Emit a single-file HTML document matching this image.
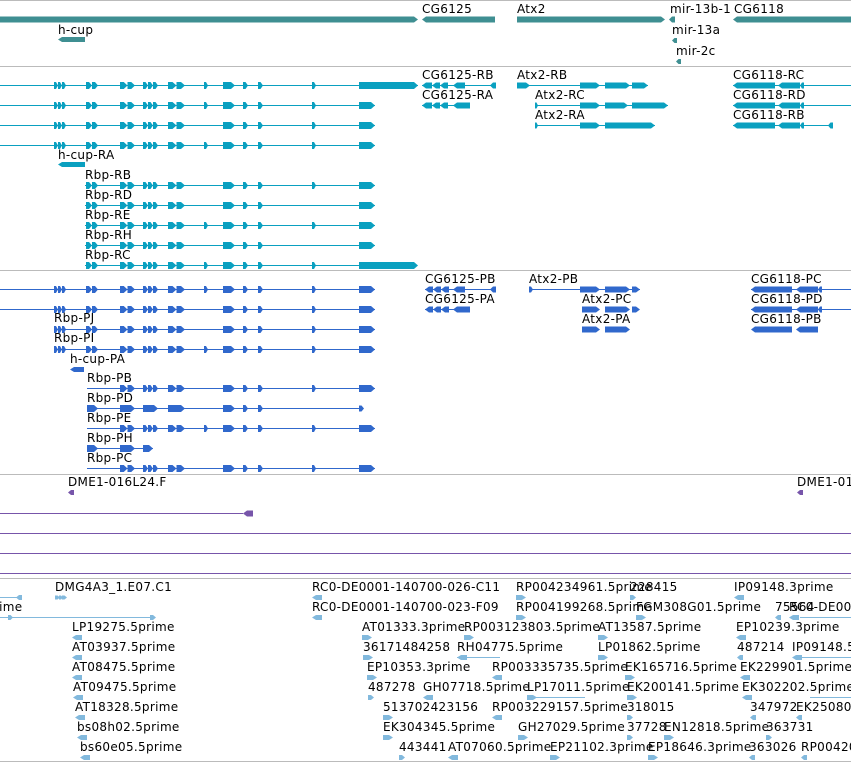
<!DOCTYPE html>
<html><head><meta charset="utf-8">
<style>
html,body{margin:0;padding:0;background:#fff;}
svg{display:block;}
text{font-family:"DejaVu Sans","Liberation Sans",sans-serif;font-size:12px;fill:#000;letter-spacing:0.3px;}
</style></head>
<body>
<svg id="s" width="851" height="762" xmlns="http://www.w3.org/2000/svg">
<g fill="#bbb" shape-rendering="crispEdges">
<rect x="0" y="0" width="851" height="1"/>
<rect x="0" y="66" width="851" height="1"/>
<rect x="0" y="270" width="851" height="1"/>
<rect x="0" y="474" width="851" height="1"/>
<rect x="0" y="578" width="851" height="1"/>
<rect x="0" y="761" width="851" height="1"/>
</g>
</svg>
<script>
var s=document.getElementById('s');var NS='http://www.w3.org/2000/svg';
function el(n,a,t){var e=document.createElementNS(NS,n);for(var k in a)e.setAttribute(k,a[k]);if(t)e.textContent=t;s.appendChild(e);return e;}
function T(x,y,str){el('text',{x:x,y:y},str);}
function L(x1,x2,y,c){el('rect',{x:x1,y:y,width:x2-x1,height:1,fill:c,'shape-rendering':'crispEdges'});}
function B(x1,x2,y,h,c,d){y=y+0.5;var hh=h/2,p=Math.min(4,(x2-x1)/2);var pts;
 if(d=='r')pts=[[x1,y-hh],[x2-p,y-hh],[x2,y],[x2-p,y+hh],[x1,y+hh]];
 else if(d=='l')pts=[[x1+p,y-hh],[x2,y-hh],[x2,y+hh],[x1+p,y+hh],[x1,y]];
 else pts=[[x1,y-hh],[x2,y-hh],[x2,y+hh],[x1,y+hh]];
 el('polygon',{points:pts.map(function(q){return q.join(',')}).join(' '),fill:c});}
var G='#3f8f92';
B(0,418,19,6,G,'r');B(422,495,19,6,G,'l');B(517,665,19,6,G,'r');B(669,675,19,6,G,'l');B(733,851,19,6,G,'l');
T(422,13,'CG6125');T(517,13,'Atx2');T(670,13,'mir-13b-1');T(734,13,'CG6118');
T(58,34,'h-cup');B(58,85,39,5,G,'l');
T(672,34,'mir-13a');B(672,677,40,5,G,'l');T(676,55,'mir-2c');B(676,681,61,5,G,'l');
var ex=[[54,66],[86,98],[120,135],[143,158],[168,185],[204,208],[223,235],[243,248],[258,263],[312,316],[359,375]];
function rbp(y,c,start,end,longEnd,skip){
 L(start,end,y,c);
 ex.forEach(function(e,i){if(e[0]<start)return;if(skip&&skip.indexOf(i)>=0)return;if(e[0]>=end)return;
  var x2=e[1];if(i==10&&longEnd)x2=longEnd;
  if(e[1]-e[0]>10&&i!=5){var n=(i==0||i==3)?3:(i==1||i==2||i==4?2:1);var w=(x2-e[0])/n;if(i==10)n=1,w=x2-e[0];for(var k=0;k<n;k++)B(e[0]+k*w,e[0]+(k+1)*w,y,7,c,'r');}
  else B(e[0],e[1],y,7,c,'r');});
}
var C='#0aa0c0';
rbp(85,C,0,418,418);rbp(105,C,0,375);rbp(125,C,0,375,null,[5]);rbp(145,C,0,375);
T(58,159,'h-cup-RA');B(58,85,164,5,C,'l');
var rl=['Rbp-RB','Rbp-RD','Rbp-RE','Rbp-RH','Rbp-RC'];
rl.forEach(function(n,i){var y=185+20*i;T(85,y-6,n);rbp(y,C,85,375,i==4?418:null,(i==1||i==3)?[5,9]:(i==0?[5]:null));});
T(422,79,'CG6125-RB');L(422,495,85,C);B(422,432,85,6,C,'l');B(432,440,85,6,C,'l');B(440,448,85,6,C,'l');B(453,465,85,6,C,'l');B(490,496,85,6,C,'l');
T(422,99,'CG6125-RA');L(422,470,105,C);B(422,432,105,6,C,'l');B(432,440,105,6,C,'l');B(440,448,105,6,C,'l');B(453,470,105,6,C,'l');
T(517,79,'Atx2-RB');L(517,648,85,C);B(517,530,85,6,C,'r');B(580,600,85,6,C,'r');B(605,630,85,6,C,'r');B(632,648,85,6,C,'r');
T(535,99,'Atx2-RC');L(535,668,105,C);B(535,538,105,6,C,'r');B(580,600,105,6,C,'r');B(605,628,105,6,C,'r');B(632,668,105,6,C,'r');
T(535,119,'Atx2-RA');L(535,655,125,C);B(535,538,125,6,C,'r');B(580,600,125,6,C,'r');B(605,655,125,6,C,'r');
T(733,79,'CG6118-RC');L(733,851,85,C);B(733,775,85,6,C,'l');B(778,800,85,6,C,'l');B(800,804,85,6,C,'l');
T(733,99,'CG6118-RD');L(733,851,105,C);B(733,775,105,6,C,'l');B(778,800,105,6,C,'l');B(800,804,105,6,C,'l');
T(733,119,'CG6118-RB');L(733,833,125,C);B(733,775,125,6,C,'l');B(778,800,125,6,C,'l');B(800,804,125,6,C,'l');B(828,833,125,6,C,'l');
var P='#3068cc';
rbp(289,P,0,375);rbp(309,P,0,375,null,[5]);
T(54,322,'Rbp-PJ');rbp(329,P,54,375,null,[5]);
T(54,342,'Rbp-PI');rbp(349,P,54,375);
T(70,363,'h-cup-PA');B(70,84,369,5,P,'l');
T(87,382,'Rbp-PB');rbp(388,P,87,375,null,[5]);
T(87,402,'Rbp-PD');L(87,363,408,P);ex.slice(2,9).forEach(function(e,i){if(i!=3)B(e[0],e[1],408,7,P,'r');});B(87,98,408,7,P,'r');B(359,364,408,6,P,'r');
T(87,422,'Rbp-PE');rbp(428,P,87,375);
T(87,442,'Rbp-PH');L(87,153,448,P);B(87,98,448,7,P,'r');B(120,135,448,7,P,'r');B(143,153,448,7,P,'r');
T(87,462,'Rbp-PC');rbp(468,P,87,375,null,[5]);
T(425,283,'CG6125-PB');L(425,495,289,P);B(425,433,289,6,P,'l');B(433,441,289,6,P,'l');B(441,449,289,6,P,'l');B(453,465,289,6,P,'l');B(490,496,289,6,P,'l');
T(425,303,'CG6125-PA');L(425,470,309,P);B(425,433,309,6,P,'l');B(433,441,309,6,P,'l');B(441,449,309,6,P,'l');B(453,470,309,6,P,'l');
T(529,283,'Atx2-PB');L(529,640,289,P);B(529,533,289,6,P,'r');B(580,600,289,6,P,'r');B(605,630,289,6,P,'r');B(632,640,289,6,P,'r');
T(582,303,'Atx2-PC');B(582,600,309,6,P,'r');B(605,630,309,6,P,'r');B(632,640,309,6,P,'r');
T(582,323,'Atx2-PA');B(582,600,329,6,P,'r');B(605,630,329,6,P,'r');
T(751,283,'CG6118-PC');L(751,851,289,P);B(751,792,289,6,P,'l');B(796,818,289,6,P,'l');B(818,822,289,6,P,'l');
T(751,303,'CG6118-PD');L(751,851,309,P);B(751,792,309,6,P,'l');B(796,818,309,6,P,'l');B(818,822,309,6,P,'l');
T(751,323,'CG6118-PB');B(751,792,329,6,P,'l');B(796,818,329,6,P,'l');
var V='#7755aa';
T(68,486,'DME1-016L24.F');B(68,74,492,5,V,'l');T(797,486,'DME1-01');B(797,803,492,5,V,'l');
L(0,243,513,V);B(243,253,513,6,V,'l');L(0,851,533,V);L(0,851,553,V);L(0,851,573,V);
var E='#82b9dd';
L(0,20,597,E);B(16,22,597,5,E,'l');T(55,591,'DMG4A3_1.E07.C1');B(55,60,597,4,E,'r');B(59,63,597,4,E,'r');B(62,67,597,4,E,'r');
T(-22,611,'5prime');L(0,155,617,E);B(8,13,617,5,E,'r');B(150,156,617,5,E,'r');
var rows=[
[[312,'RC0-DE0001-140700-026-C11','l'],[516,'RP004234961.5prime','r'],[630,'228415','r'],[734,'IP09148.3prime','l']],
[[312,'RC0-DE0001-140700-023-F09','l'],[516,'RP004199268.5prime','r'],[636,'FGM308G01.5prime','r'],[775,'75564','l'],[789,'RC0-DE0001','l']],
[[72,'LP19275.5prime','l'],[362,'AT01333.3prime','r'],[464,'RP003123803.5prime','r'],[598,'AT13587.5prime','r'],[736,'EP10239.3prime','l']],
[[72,'AT03937.5prime','l'],[363,'36171484258','r'],[457,'RH04775.5prime','l'],[598,'LP01862.5prime','r'],[737,'487214','l'],[792,'IP09148.5prime','l']],
[[72,'AT08475.5prime','l'],[367,'EP10353.3prime','r'],[492,'RP003335735.5prime','l'],[625,'EK165716.5prime','r'],[740,'EK229901.5prime','l']],
[[73,'AT09475.5prime','l'],[368,'487278','r'],[423,'GH07718.5prime','l'],[527,'LP17011.5prime','r'],[627,'EK200141.5prime','r'],[742,'EK302202.5prime','l']],
[[75,'AT18328.5prime','l'],[383,'513702423156','r'],[492,'RP003229157.5prime','l'],[627,'318015','r'],[750,'347972','l'],[796,'EK250801','l']],
[[77,'bs08h02.5prime','l'],[383,'EK304345.5prime','r'],[518,'GH27029.5prime','r'],[627,'37728','r'],[664,'EN12818.5prime','r'],[766,'363731','r']],
[[80,'bs60e05.5prime','l'],[399,'443441','r'],[448,'AT07060.5prime','l'],[550,'EP21102.3prime','r'],[648,'EP18646.3prime','r'],[749,'363026','l'],[801,'RP004201','l']]];
rows.forEach(function(r,i){var y=591+20*i;r.forEach(function(f){T(f[0],y,f[1]);var w=(f[1].length>8)?10:6;B(f[0],f[0]+w,y+6,5,E,f[2]);});});
L(457,500,657,E);L(527,585,697,E);L(800,851,617,E);L(800,851,657,E);L(810,851,697,E);
</script>
</body></html>
